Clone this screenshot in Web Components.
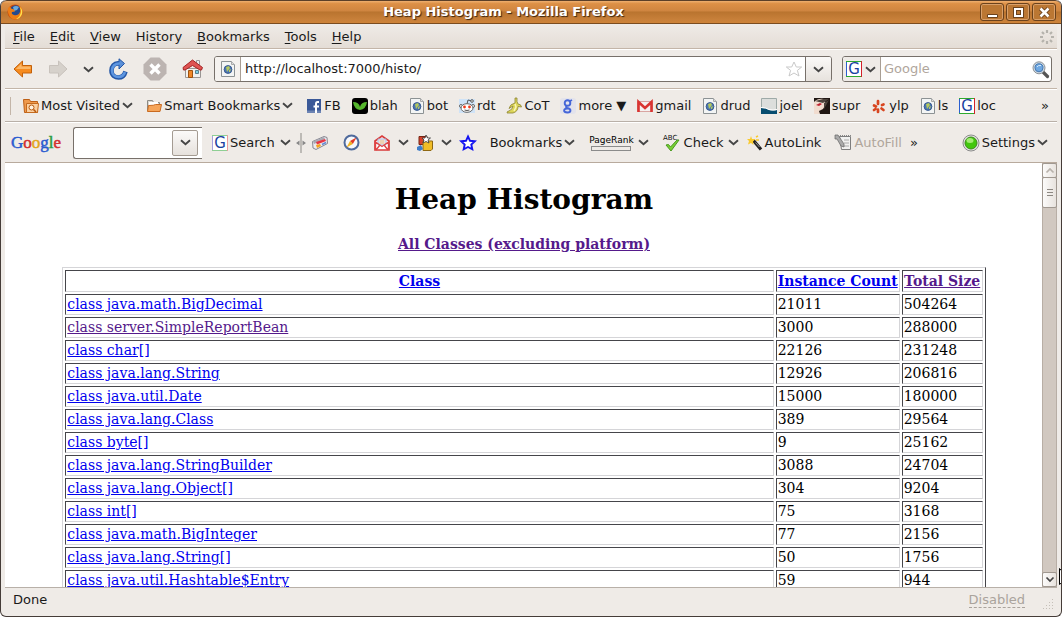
<!DOCTYPE html>
<html lang="en">
<head>
<meta charset="utf-8">
<title>Heap Histogram - Mozilla Firefox</title>
<style>
html,body{height:100%;margin:0}
body{background:#fff;overflow:hidden;font:13px/16px "DejaVu Sans",sans-serif;color:#1a1a1a}
</style>
</head>
<body>
<browser-window></browser-window>
<script>
const base = '*{box-sizing:border-box}button{font:inherit;color:inherit;background:none;border:0;margin:0;padding:0;display:flex;align-items:center}a{color:inherit;text-decoration:none}svg{display:block;flex:none;overflow:visible}';
function define(name, css, html) {
  const t = document.createElement('template');
  customElements.define(name, class extends HTMLElement {
    connectedCallback() {
      if (this.shadowRoot) return;
      t.innerHTML = '<style>' + base + css + '</style>' + (typeof html === 'function' ? html(this) : html);
      this.attachShadow({ mode: 'open' }).append(t.content.cloneNode(true));
    }
  });
}

const google = (b, t, r) => `<path d="M0 0h16v16H0z" fill="#fff"/><path d="M.5 16V.5" stroke="${b}"/><path d="M0 .5h15M0 15.500h15" stroke="${t}"/><path d="M15.500 0v16" stroke="${r}"/><text x="8" y="13" text-anchor="middle" font-family="DejaVu Sans" font-size="15" fill="#1b3fa0">G</text>`;
const icons = {
  chevron: [11, 7, '<path d="M1 1.200l4.500 4L10 1.200" fill="none" stroke="#454545" stroke-width="1.900"/>'],
  firefox: [16, 16, '<circle cx="8" cy="8" r="7.500" fill="#c9480c"/><circle cx="8.500" cy="7" r="5.800" fill="#274a8c"/><path d="M6 3q3-2 6 0l-2 3-3 1z" fill="#69a9dd"/><path d="M1 4C0 11 4 16 9 15.500 13 15 16 12 15.500 6 14.500 3 13 2 12 2q2 3 1 6-2 4-6 3-3-1-2-3l3-.5-1-2-3-1-1-2z" fill="#ee7d15"/><path d="M13 3q3 3 2 7-2 5-6 5 5-3 5-8z" fill="#ffe04c"/>'],
  back: [20, 18, '<path d="M1 9L9.500 1v4.500H18.500v7.500H9.500v4z" fill="#f68b1f" stroke="#c3600a" stroke-linejoin="round"/><path d="M2.800 9L8.500 3.500v3h9v2.500z" fill="#fbb768"/>'],
  forward: [20, 18, '<path d="M19 9l-8.500-8v4.500H1.500v7.500h9v4z" fill="#d6d1cb" stroke="#c8c2bc" stroke-linejoin="round"/>'],
  reload: [19, 22, '<path d="M10.500 5.500C5 4.500 2.500 9 2.500 12.500c0 5 4 7 7 7 4 0 6-2.500 7-6" fill="none" stroke="#2456a6" stroke-width="4.600"/><path d="M10 .8l5.500 4.700L10 11z" fill="#5b90d8" stroke="#2456a6"/><path d="M11 5.500C6 5 3 8.500 3 12.500c0 4 3 6.500 6.500 6.500 3.500 0 5.500-2 6.500-5" fill="none" stroke="#5d95e0" stroke-width="2.600"/>'],
  stop: [24, 24, '<path d="M7.500.5h9l7 7v9l-7 7h-9l-7-7v-9z" fill="#bcb4b1"/><path d="M7.500 7.500l9 9m0-9l-9 9" stroke="#fff" stroke-width="3.400"/>'],
  home: [22, 22, '<path d="M14.500 2.500h3v6h-3z" fill="#eee" stroke="#999"/><path d="M3.500 10.500h15v9h-15z" fill="#f2f1ef" stroke="#9a9694"/><path d="M1 9.500L10.500 2l10 7.500-1 2.500H18l-7.500-4.500L3 12H1.500z" fill="#df5352" stroke="#a32424" stroke-linejoin="round"/><path d="M6.500 12.500h4v7h-4z" fill="#f0882a" stroke="#9c5210"/><path d="M13.500 12.500h3v3h-3z" fill="#7fd4e8" stroke="#598090"/>'],
  page: [16, 16, '<path d="M1.500.5h10l3 3v12h-13z" fill="#f3f5f5" stroke="#8c9294"/><path d="M11.500.5v3h3" fill="#ddd" stroke="#aaa"/><circle cx="8" cy="8.500" r="3.900" fill="#4a75b4" stroke="#3a5b90"/><path d="M6 6l3-1 1 2-3 4zM9 9l2-1-1 3-1 0z" fill="#b4c95e"/>'],
  star: [18, 17, '<path d="M9 1l2.300 5h5.400l-4.300 3.400 1.600 5.600L9 12l-5 3 1.600-5.600L1.300 6h5.400z" fill="#fff" stroke="#c9c9c9"/>'],
  bluestar: [16, 16, '<path d="M8 1.500l2 4.300 4.800.4-3.500 3.300 1 4.800L8 12l-4.300 2.300 1-4.800L1.200 6.200 6 5.800z" fill="#fff" stroke="#1414f0" stroke-width="1.900"/>'],
  g: [16, 16, google('#2b5fd0', '#2eaa2e', '#d3222a')],
  gsoft: [16, 16, google('#a5a0dd', '#8fcf94', '#eb9c9c')],
  magnifier: [17, 17, '<path d="M10.500 10.500l5 5" stroke="#555" stroke-width="3.200" stroke-linecap="round"/><circle cx="7" cy="6.800" r="6" fill="#c9d6e2" stroke="#8d9296"/><circle cx="7" cy="6.800" r="4" fill="#6fa8e2" stroke="#4678b0"/><path d="M5 6q1-2 4-1.500" stroke="#d7ebfb" fill="none"/>'],
  visited: [16, 16, '<path d="M.5 1.500h6l1 2h7v11h-13z" fill="#ef9a4d" stroke="#bd5f16"/><path d="M3.500 5.500h12l-1 9h-11z" fill="#fbd0a1" stroke="#c56a1e"/><circle cx="8.500" cy="9.500" r="2.500" fill="#fff1df" stroke="#b8590e"/><path d="M10.500 11.500l2.500 2.500" stroke="#b8590e" stroke-width="1.600"/>'],
  folder: [16, 16, '<path d="M1.500 2.500h5l1 2h6v8h-12z" fill="#d9d6d0" stroke="#8c8a84"/><path d="M3 4h9v4H3z" fill="#fff"/><path d="M2.500 7.500q6 0 7-1h6l-1.500 7H1.500z" fill="#f6a55a" stroke="#c96a20"/>'],
  facebook: [16, 16, '<path d="M1 1h14v14H1z" fill="#3b5998"/><path d="M1 12.500h14V15H1z" fill="#6d84b4"/><path d="M13 4h-1.500Q10 4 10 6v9M7.500 8.500H13" fill="none" stroke="#fff" stroke-width="2"/>'],
  leaf: [16, 16, '<rect width="16" height="16" rx="3"/><path d="M8 12Q2 11 1 4q6 0 7 5 1-5 7-5-1 7-7 8z" fill="#55b62d"/>'],
  reddit: [16, 16, '<path d="M0 1h16v14H0z" fill="#cfe3f7"/><path d="M8 6l1-4 4 1" fill="none" stroke="#555"/><circle cx="13" cy="3" r="1.300" fill="#fff" stroke="#555"/><circle cx="2" cy="8" r="1.500" fill="#fff" stroke="#666"/><circle cx="14" cy="8" r="1.500" fill="#fff" stroke="#666"/><ellipse cx="8" cy="10" rx="6" ry="4.300" fill="#fff" stroke="#666"/><circle cx="5.500" cy="9" r="1.400" fill="#f03a17"/><circle cx="10.500" cy="9" r="1.400" fill="#f03a17"/><path d="M5.500 12q2.500 1 5 0" stroke="#555" fill="none"/>'],
  banana: [16, 16, '<path d="M9 0h2q-.5 4 1 6 3 0 3.500 3L12 8.500q0 5-5 6.500H1q0-2 2-2 4-2 4-5l-4 2.500Q4 6 9 5z" fill="#dcd558" stroke="#8b8334" stroke-width=".8"/><path d="M9 6l1 3-2 4" stroke="#fbf6b8" fill="none" stroke-width="1.500"/>'],
  gblue: [16, 16, '<rect width="16" height="16" rx="3" fill="#e3e3ec"/><g fill="none" stroke="#4566d8" stroke-width="1.900"><circle cx="7.500" cy="5" r="2.800"/><path d="M10 3l2-1M7 8q-2 1 0 2c5 1 4 4.500.5 4.500-5 0-4-4 0-4"/></g>'],
  mail: [16, 16, '<path d="M.5 3.500h15v10H.5z" fill="#f5f1f0" stroke="#d9a5a2"/><path d="M1.500 14V4L8 10l6.500-6v10" fill="none" stroke="#d93431" stroke-width="2.600"/>'],
  wave: [16, 16, '<path d="M.5.5h15v14H.5z" fill="#dcdedc" stroke="#9eaaa8"/><path d="M0 10q5 0 8 2 4 1 8 0v4H0z" fill="#074d70"/><path d="M0 9.500q5 0 8 2 4 1 8 0" stroke="#fff" fill="none"/>'],
  portrait: [16, 16, '<path d="M0 0h16v16H0z" fill="#201713"/><path d="M0 4q4-4 10-3l2 5-3 5-4 2 1 3H0z" fill="#f1dccf"/><path d="M1 3l8-2 6 0-6 4zM10 5l5-3-5 9z" fill="#4c433c"/><path d="M2 7l4-2 2 1-3 2z" fill="#bf2230"/>'],
  yelp: [16, 16, '<g stroke="#d8451f" stroke-width="2.700" stroke-linecap="round"><path d="M7 3v3M3 7.500l2 1M11 7l1.500-.5M10.500 10.500l2 1.500M7 11.500v2.500M3 12l1.500-1"/></g>'],
  grip: [10, 20, '<path d="M5 0v20" stroke="#8b8985"/><path d="M3.500 7.500L0 10l3.500 2.500zM6.500 7.500L10 10l-3.500 2.500z" fill="#888"/>'],
  news: [18, 16, '<path d="M1.500 6.500L13 1.500l3 1 .5 6L5 14.500l-3-1.500z" fill="#ecebef" stroke="#878792"/><path d="M2 6.500l11-4.500 1 2L3 9z" fill="#a9a9b3"/><path d="M5 7l9-3 1 2-9 3.500z" fill="#e83544"/><path d="M5 10l4-1 1 2-4 2z" fill="#f5a31e"/><path d="M11 9.500l4-2" stroke="#6389d5" stroke-width="1.700"/>'],
  compass: [17, 17, '<circle cx="8.500" cy="8.500" r="7" fill="#f7f8fb" stroke="#4f6a9c" stroke-width="2"/><path d="M13.500 3.500L9.800 10 7 7z" fill="#e33b23"/><path d="M3.500 13.500L7 7l2.800 3z" fill="#f1b322"/>'],
  letter: [16, 16, '<path d="M1 6l7-5 7 5v9H1z" fill="#fff" stroke="#d93b3b" stroke-width="1.700"/><path d="M4 4h8v6H4z" fill="#eef0f7" stroke="#a9b3d4"/><path d="M5.500 6h5M5.500 8h5" stroke="#e8b36f"/><path d="M1.500 15V7l6.500 4.500L14.500 7v8M2 15l4-5M14 15l-4-5" fill="none" stroke="#e04444" stroke-width="1.400"/>'],
  gadgets: [16, 16, '<path d="M2 1.500h8v8H2z" fill="#d8412b" stroke="#742715"/><path d="M6 6h9.500v8L14 15.500H6z" fill="#f0bd28" stroke="#8f6813"/><path d="M0 12l4-2 2 4-3 2-3-1z" fill="#3f7dc8"/><path d="M9 0l1.500 3h3L11 5l1 3-3-1.500L6 8l1-3-2-2h3z" fill="#fff" stroke="#333" stroke-width=".8"/>'],
  check: [17, 18, '<text x="0" y="6" font-family="DejaVu Sans" font-size="7" fill="#111">ABC</text><path d="M3 11l2.500-.5 2 2.500L14 6l2 0-8 11z" fill="#78cf35" stroke="#4a9a1f" stroke-linejoin="round"/>'],
  wand: [16, 16, '<path d="M6 5l8 9.500" stroke="#222" stroke-width="3.300"/><path d="M8.500 7.500l4 4.500" stroke="#999"/><path d="M4 1l1 3h3.500L6 6.500 6.500 10 4 8 1 9.500 2 6 0 4h3z" fill="#f9ca2e"/><path d="M9 2l2-1M9 5h3" stroke="#f9ca2e" stroke-width="1.500"/>'],
  autofill: [17, 17, '<path d="M4.500 2.500h11v13h-9z" fill="#f1f1f0" stroke="#7e7e7e"/><path d="M9 6h5M9 9h5M9 12h5" stroke="#aaa"/><path d="M0 1h3l6 9v3l-3-1L2 5H0z" fill="#aaa" stroke="#666" stroke-width=".7"/><path d="M5 1.500h11" stroke="#888" stroke-dasharray="1 1"/>'],
  ball: [18, 18, '<circle cx="9" cy="9" r="8" fill="#e5e5e3" stroke="#8b8b8b"/><circle cx="9" cy="9" r="6" fill="#42c70d" stroke="#3b8a1b"/><ellipse cx="8" cy="6.500" rx="3.500" ry="2.500" fill="#a2ec73"/>'],
  throbber: [14, 14, '<g stroke="#b5b2ac" stroke-width="2.200"><path d="M7 0v3M7 11v3M0 7h3M11 7h3M2 2l2 2M10 10l2 2M12 2l-2 2M4 10l-2 2"/></g>'],
  min: [13, 13, '<path d="M1.500 8.500h10v3h-10z" fill="#fff" stroke="#6b421c"/>'],
  max: [13, 13, '<path d="M3 3h7v7H3z" fill="none" stroke="#6b421c" stroke-width="4"/><path d="M3 3h7v7H3z" fill="none" stroke="#fff" stroke-width="2"/>'],
  close: [13, 13, '<path d="M2.500 2.500l8 8m0-8l-8 8" stroke="#6b421c" stroke-width="4.500"/><path d="M2.500 2.500l8 8m0-8l-8 8" stroke="#fff" stroke-width="2.600"/>'],
  up: [8, 5, '<path d="M.5 4.500L4 1l3.500 3.500" fill="none" stroke="#b8b2ab" stroke-width="1.700"/>'],
  down: [8, 5, '<path d="M.5.5L4 4 7.500.5" fill="none" stroke="#444" stroke-width="1.700"/>'],
  lines: [6, 8, '<path d="M0 .5h6M0 3.500h6M0 6.500h6" stroke="#8d8882"/>'],
  size: [12, 12, '<g fill="#c5bfb8"><path d="M9 0h1v1H9zM6 3h1v1H6zM9 3h1v1H9zM3 6h1v1H3zM6 6h1v1H6zM9 6h1v1H9zM0 9h1v1H0zM3 9h1v1H3zM6 9h1v1H6zM9 9h1v1H9z"/></g>'],
  pointer: [12, 20, '<path d="M.5.5v16L4.500 13l3 6 2-1-3-6H11z" fill="#fff" stroke="#000"/>']
};
define('ui-icon', ':host{display:block;flex:none}', el => {
  const [w, h, body] = icons[el.getAttribute('name')];
  return `<svg width="${w}" height="${h}" viewBox="0 0 ${w} ${h}" aria-hidden="true">${body}</svg>`;
});

define('title-bar', `:host{display:flex;align-items:center;height:24px;flex:none;padding:0 5px 0 6px;border-top:1px solid #5b3f28;border-bottom:1px solid #7b4c1f;background:linear-gradient(#efb070,#dd9046 12%,#cf8540 45%,#b9742f 50%,#c8803a 85%,#ce8338);border-radius:6px 6px 0 0}
 h2{flex:1;margin:0;padding-left:4px;text-align:center;font:bold 13px/16px "DejaVu Sans",sans-serif;color:#fff;text-shadow:1px 1px 1px #3a2410}
 div{display:flex;gap:2px}button{width:24px;height:18px;justify-content:center;border:1px solid #6b421c;border-radius:3px;box-shadow:inset 0 0 0 1px #d9a06a;background:#bb7733}`,
 `<ui-icon name="firefox"></ui-icon><h2><slot></slot></h2><div><button aria-label="Minimize"><ui-icon name="min"></ui-icon></button><button aria-label="Maximize"><ui-icon name="max"></ui-icon></button><button aria-label="Close"><ui-icon name="close"></ui-icon></button></div>`);

define('menu-bar', `:host{display:flex;align-items:center;height:25px;flex:none;gap:15px;padding:2px 3px 0 8px;background:linear-gradient(#efebe7,#e4ddd6);border-bottom:1px solid #c3b5a8}
 u{text-underline-offset:2px}ui-icon{margin-left:auto}`,
 ['<u>F</u>ile','<u>E</u>dit','<u>V</u>iew','Hi<u>s</u>tory','<u>B</u>ookmarks','<u>T</u>ools','<u>H</u>elp'].map(m => `<button><span>${m}</span></button>`).join('') + '<ui-icon name="throbber"></ui-icon>');

define('nav-bar', `:host{display:flex;align-items:center;height:40px;flex:none;padding:0 5px 0 8px;border-top:1px solid #fff;border-bottom:1px solid #c3b5a8}
 .tools{display:flex;align-items:center;gap:15px;width:201px;flex:none}
 .field{display:flex;align-items:center;height:26px;background:#fff;border:1px solid #77706a;border-radius:3px;overflow:hidden}
 .url{flex:1;min-width:0}.search{width:210px;margin-left:10px;padding-right:2px;flex:none}
 .ident{width:26px;height:24px;justify-content:center;border-right:1px solid #a89e94;background:#f5f2ef}
 .engine{width:38px;height:24px;gap:3px;padding-left:3px;border-right:1px solid #a89e94;background:#efebe7;flex:none}
 .drop{width:26px;height:26px;margin:-1px 0;justify-content:center;border-left:1px solid #77706a;background:linear-gradient(#fbfaf9,#e6e1dc)}
 input{flex:1;min-width:0;border:0;padding:0 4px;font:inherit;color:inherit;background:none;outline:0}.search input{padding:0 3px}input::placeholder{color:#b0a69c;opacity:1}
 .fav{margin-right:2px}`,
 `<div class="tools"><button aria-label="Back"><ui-icon name="back"></ui-icon></button><button aria-label="Forward"><ui-icon name="forward"></ui-icon></button><button aria-label="Recent pages"><ui-icon name="chevron"></ui-icon></button><button aria-label="Reload"><ui-icon name="reload"></ui-icon></button><button aria-label="Stop"><ui-icon name="stop"></ui-icon></button><button aria-label="Home"><ui-icon name="home"></ui-icon></button></div>
 <div class="field url"><button class="ident" aria-label="Site identity"><ui-icon name="page"></ui-icon></button><input aria-label="Location" value="http://localhost:7000/histo/"><button class="fav" aria-label="Bookmark this page"><ui-icon name="star"></ui-icon></button><button class="drop" aria-label="Show history"><ui-icon name="chevron"></ui-icon></button></div>
 <div class="field search"><button class="engine" aria-label="Search engine"><ui-icon name="g"></ui-icon><ui-icon name="chevron"></ui-icon></button><input aria-label="Search" placeholder="Google"><button aria-label="Go"><ui-icon name="magnifier"></ui-icon></button></div>`);

define('bookmark-link', ':host{display:block;flex:none}:host([menu]){margin-right:2px}a{display:flex;align-items:center;gap:2px;white-space:nowrap}',
 el => `<a href="#"><ui-icon name="${el.getAttribute('icon')}"></ui-icon><span><slot></slot></span>${el.hasAttribute('menu') ? '<ui-icon name="chevron"></ui-icon>' : ''}</a>`);
define('bookmarks-bar', `:host{display:flex;align-items:center;height:33px;flex:none;gap:11px;padding:0 8px 0 5px;border-top:1px solid #fff;border-bottom:1px solid #b9b0a8}
 i{width:2px;height:18px;border-left:1px solid #c3b5a8}button{margin-left:auto}`,
 '<i></i>' + [['visited','Most Visited',1],['folder','Smart Bookmarks',1],['facebook','FB'],['leaf','blah'],['page','bot'],['reddit','rdt'],['banana','CoT'],['gblue','more ▼'],['mail','gmail'],['page','drud'],['wave','joel'],['portrait','supr'],['yelp','ylp'],['page','ls'],['g','loc']].map(b => `<bookmark-link icon="${b[0]}"${b[2] ? ' menu' : ''}>${b[1]}</bookmark-link>`).join('') + '<button aria-label="More bookmarks">»</button>');

define('google-bar', `:host{display:flex;align-items:center;height:41px;flex:none;gap:8px;padding:0 9px 0 6px;border-top:1px solid #fff;border-bottom:1px solid #b8aa9d}
 button{white-space:nowrap;flex:none}
 .logo{font:17px/24px "Liberation Serif",serif;width:54px;-webkit-text-stroke:.5px}.b{color:#2a5bd0}.r{color:#d3302f}.y{color:#e3a51d}.n{color:#2c9c3f}
 .combo{display:flex;align-items:center;width:129px;height:32px;flex:none;background:#fff;border:1px solid #77706a;border-right:0;border-radius:3px 0 0 3px;padding-right:4px}
 .combo input{flex:1;min-width:0;border:0;background:none;font:inherit;outline:0}.combo button{width:26px;height:26px;justify-content:center;border:1px solid #a49b92;border-radius:2px;background:linear-gradient(#fbfaf9,#e6e1dc)}
 .find{display:flex;align-items:center;gap:5px;margin-left:2px}.t{gap:2px}.f{gap:4px}.w{gap:8px}.m{margin-left:6px}.end{margin-left:auto}
 .off{color:#b0a69c}.rank{font:9px/10px "DejaVu Sans",sans-serif;color:#000}
 .rank b{display:block;width:40px;height:5px;margin:1px auto 0;border:1px solid #8b8b8b}`,
 `<button class="logo" aria-label="Google home"><span><span class="b">G</span><span class="r">o</span><span class="y">o</span><span class="b">g</span><span class="n">l</span><span class="r">e</span></span></button>
 <div class="combo"><input aria-label="Google search"><button aria-label="Search history"><ui-icon name="chevron"></ui-icon></button></div>
 <div class="find"><button class="t"><ui-icon name="gsoft"></ui-icon>Search</button><button aria-label="Search options"><ui-icon name="chevron"></ui-icon></button><ui-icon name="grip"></ui-icon><button aria-label="News"><ui-icon name="news"></ui-icon></button></div>
 <button class="m" aria-label="Compass"><ui-icon name="compass"></ui-icon></button>
 <button class="m w" aria-label="Mail"><ui-icon name="letter"></ui-icon><ui-icon name="chevron"></ui-icon></button>
 <button class="w" aria-label="Gadgets"><ui-icon name="gadgets"></ui-icon><ui-icon name="chevron"></ui-icon></button>
 <button aria-label="Add bookmark"><ui-icon name="bluestar"></ui-icon></button>
 <button class="m t">Bookmarks<ui-icon name="chevron"></ui-icon></button>
 <button class="m f"><span class="rank">PageRank<b></b></span><ui-icon name="chevron"></ui-icon></button>
 <button class="m f"><ui-icon name="check"></ui-icon>Check<ui-icon name="chevron"></ui-icon></button>
 <button class="t"><ui-icon name="wand"></ui-icon>AutoLink</button>
 <button class="m t off" disabled><ui-icon name="autofill"></ui-icon>AutoFill</button>
 <button aria-label="More buttons">»</button>
 <button class="t end"><ui-icon name="ball"></ui-icon>Settings<ui-icon name="chevron"></ui-icon></button>`);

const rows = [['java.math.BigDecimal',21011,504264],['server.SimpleReportBean',3000,288000,1],['char[]',22126,231248],['java.lang.String',12926,206816],['java.util.Date',15000,180000],['java.lang.Class',389,29564],['byte[]',9,25162],['java.lang.StringBuilder',3088,24704],['java.lang.Object[]',304,9204],['int[]',75,3168],['java.math.BigInteger',77,2156],['java.lang.String[]',50,1756],['java.util.Hashtable$Entry',59,944]];
define('histogram-table', `:host{display:block;width:90%;margin:14px auto 0}
 table{width:100%;table-layout:fixed;border-collapse:separate;border-spacing:2px;border:1px solid;border-color:#d5d5d8 #45454a #45454a #d5d5d8}
 th,td{padding:1px;border:1px solid;border-color:#45454a #d5d5d8 #d5d5d8 #45454a;text-align:left;line-height:17px;white-space:nowrap}th{text-align:center;line-height:18px}
 .n{width:124px}.t{width:81px}a{color:#0000ee;text-decoration:underline}.v{color:#551a8b}`,
 `<table><thead><tr><th><a href="#">Class</a></th><th class="n"><a href="#">Instance Count</a></th><th class="t"><a class="v" href="#">Total Size</a></th></tr></thead><tbody>${rows.map(r => `<tr><td><a href="#"${r[3] ? ' class="v"' : ''}>class ${r[0]}</a></td><td>${r[1]}</td><td>${r[2]}</td></tr>`).join('')}</tbody></table>`);

define('scroll-bar', `:host{display:flex;flex-direction:column;width:15px;flex:none;background:#d1c8c0;border:0 solid #b8aea5;border-width:0 1px}
 button{justify-content:center;margin:0 -1px;border:1px solid #a09890;border-radius:2px;background:linear-gradient(90deg,#fcfbfa,#e8e3de);height:15px}.thumb{height:31px;margin-top:-1px}.down{margin-top:auto}`,
 `<button aria-label="Scroll up"><ui-icon name="up"></ui-icon></button><button class="thumb" aria-label="Scroll thumb"><ui-icon name="lines"></ui-icon></button><button class="down" aria-label="Scroll down"><ui-icon name="down"></ui-icon></button>`);

define('page-view', `:host{display:flex;flex:1;min-height:0;background:#fff;color:#000}
 main{flex:1;min-width:0;overflow:hidden;padding:21px 5px 0 6px;font:14px/18px "DejaVu Serif",serif}h1{margin:0 0 19px;font-size:28px;line-height:32px;text-align:center}
 p{margin:0;text-align:center;font-weight:bold}p a{color:#551a8b;text-decoration:underline}`,
 `<main><h1>Heap Histogram</h1><p><a href="#">All Classes (excluding platform)</a></p><histogram-table></histogram-table></main><scroll-bar></scroll-bar>`);

define('status-bar', `:host{display:flex;align-items:flex-start;justify-content:space-between;height:29px;flex:none;padding:4px 2px 0 8px;border-top:1px solid #b8b0a8}
 div{display:flex;align-items:flex-start}.d{line-height:15px;color:#aaa39c;border-bottom:1px dashed #aaa39c;margin-right:18px}ui-icon{margin-top:7px}`,
 `<span>Done</span><div><button class="d">Disabled</button><ui-icon name="size"></ui-icon></div>`);

define('browser-window', `:host{display:flex;flex-direction:column;height:100vh;box-sizing:border-box;position:relative;overflow:hidden;border-radius:6px;background:#efebe7;border:1px solid #453c38;border-top:0}
 section{flex:1;min-height:0;display:flex;flex-direction:column;padding:0 4px}.cursor{position:absolute;right:-10px;top:568px}`,
 `<title-bar>Heap Histogram - Mozilla Firefox</title-bar><section><menu-bar></menu-bar><nav-bar></nav-bar><bookmarks-bar></bookmarks-bar><google-bar></google-bar><page-view></page-view><status-bar></status-bar></section><ui-icon class="cursor" name="pointer"></ui-icon>`);
</script>
</body>
</html>
